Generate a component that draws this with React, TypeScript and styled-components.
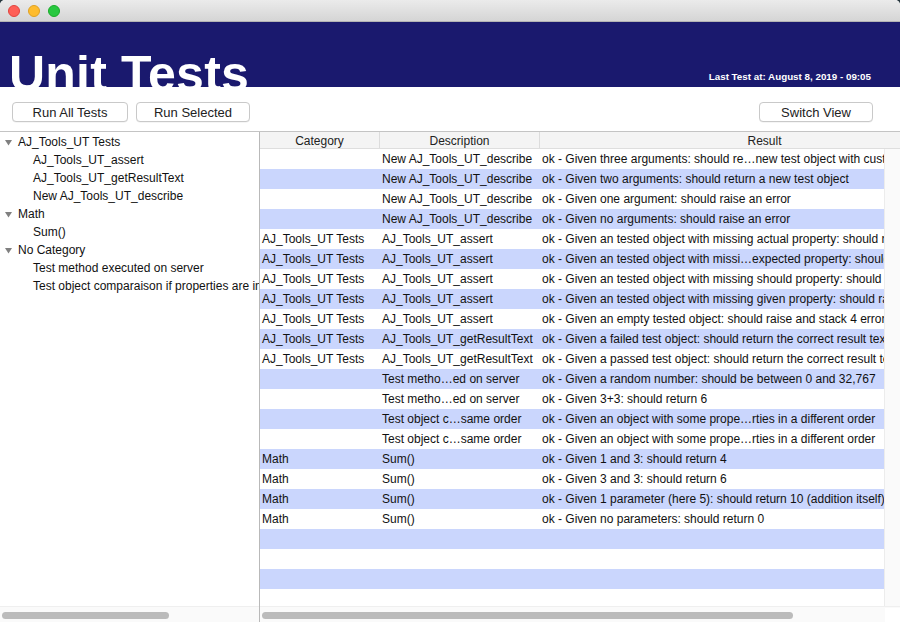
import React from "react";
import styled, { createGlobalStyle } from "styled-components";

interface TestRow {
  category: string;
  description: string;
  result: string;
}

interface TreeNode {
  label: string;
  children: string[];
}

const tree: TreeNode[] = [
  {
    label: "AJ_Tools_UT Tests",
    children: [
      "AJ_Tools_UT_assert",
      "AJ_Tools_UT_getResultText",
      "New AJ_Tools_UT_describe",
    ],
  },
  { label: "Math", children: ["Sum()"] },
  {
    label: "No Category",
    children: [
      "Test method executed on server",
      "Test object comparaison if properties are in the same order",
    ],
  },
];

const describe = "New AJ_Tools_UT_describe";
const ajTests = "AJ_Tools_UT Tests";

const rows: TestRow[] = [
  { category: "", description: describe, result: "ok - Given three arguments: should re…new test object with custom values" },
  { category: "", description: describe, result: "ok - Given two arguments: should return a new test object" },
  { category: "", description: describe, result: "ok - Given one argument: should raise an error" },
  { category: "", description: describe, result: "ok - Given no arguments: should raise an error" },
  { category: ajTests, description: "AJ_Tools_UT_assert", result: "ok - Given an tested object with missing actual property: should raise an error" },
  { category: ajTests, description: "AJ_Tools_UT_assert", result: "ok - Given an tested object with missi…expected property: should raise an error" },
  { category: ajTests, description: "AJ_Tools_UT_assert", result: "ok - Given an tested object with missing should property: should raise an error" },
  { category: ajTests, description: "AJ_Tools_UT_assert", result: "ok - Given an tested object with missing given property: should raise an error" },
  { category: ajTests, description: "AJ_Tools_UT_assert", result: "ok - Given an empty tested object: should raise and stack 4 errors" },
  { category: ajTests, description: "AJ_Tools_UT_getResultText", result: "ok - Given a failed test object: should return the correct result text" },
  { category: ajTests, description: "AJ_Tools_UT_getResultText", result: "ok - Given a passed test object: should return the correct result text" },
  { category: "", description: "Test metho…ed on server", result: "ok - Given a random number: should be between 0 and 32,767" },
  { category: "", description: "Test metho…ed on server", result: "ok - Given 3+3: should return 6" },
  { category: "", description: "Test object c…same order", result: "ok - Given an object with some prope…rties in a different order" },
  { category: "", description: "Test object c…same order", result: "ok - Given an object with some prope…rties in a different order" },
  { category: "Math", description: "Sum()", result: "ok - Given 1 and 3: should return 4" },
  { category: "Math", description: "Sum()", result: "ok - Given 3 and 3: should return 6" },
  { category: "Math", description: "Sum()", result: "ok - Given 1 parameter (here 5): should return 10 (addition itself)" },
  { category: "Math", description: "Sum()", result: "ok - Given no parameters: should return 0" },
];

const EMPTY_ROWS = 4;

const GlobalStyle = createGlobalStyle`
  html, body {
    margin: 0;
    padding: 0;
    background: #26363d;
  }
  body {
    font-family: "Liberation Sans", Arial, sans-serif;
    color: #111;
  }
`;

const Window = styled.div`
  width: 900px;
  height: 622px;
  display: flex;
  flex-direction: column;
  background: #ffffff;
  border-radius: 5px 5px 0 0;
  overflow: hidden;
`;

const TitleBar = styled.div`
  height: 21px;
  display: flex;
  align-items: center;
  gap: 8px;
  padding-left: 8px;
  background: linear-gradient(#ebebeb, #d5d5d5);
  border-bottom: 1px solid #b4b4b4;
`;

const Light = styled.span<{ $color: string; $edge: string }>`
  width: 12px;
  height: 12px;
  border-radius: 50%;
  box-sizing: border-box;
  background: ${({ $color }) => $color};
  border: 0.5px solid ${({ $edge }) => $edge};
`;

const Banner = styled.div`
  height: 65px;
  display: flex;
  justify-content: space-between;
  align-items: flex-end;
  padding: 0 29px 0 9px;
  background: #1a196e;
  overflow: hidden;
`;

const Title = styled.h1`
  margin: 0 0 -12px 0;
  font-size: 50px;
  line-height: 50px;
  font-weight: 700;
  color: #ffffff;
  letter-spacing: 0.2px;
`;

const LastTest = styled.div`
  margin-bottom: 5px;
  font-size: 9.8px;
  font-weight: 700;
  color: #ffffff;
`;

const Toolbar = styled.div`
  height: 45px;
  box-sizing: border-box;
  display: flex;
  align-items: flex-start;
  gap: 8px;
  padding: 15px 27px 0 12px;
  border-bottom: 1px solid #c4c4c4;
`;

const Spacer = styled.div`
  flex: 1;
`;

const Button = styled.button<{ $width: number }>`
  width: ${({ $width }) => $width}px;
  height: 20px;
  padding: 0;
  border: 1px solid #c9c9c9;
  border-radius: 4px;
  background: #ffffff;
  font-family: "Liberation Sans", Arial, sans-serif;
  font-size: 13px;
  color: #222;
  box-shadow: 0 0.5px 0 rgba(0, 0, 0, 0.08);
`;

const Main = styled.div`
  flex: 1;
  display: flex;
  min-height: 0;
`;

const Sidebar = styled.div`
  width: 259px;
  display: flex;
  flex-direction: column;
  border-right: 1px solid #b9b9b9;
`;

const TreeList = styled.ul`
  flex: 1;
  margin: 0;
  padding: 1px 0 0 0;
  list-style: none;
  overflow: hidden;
`;

const TreeItem = styled.li<{ $depth: number }>`
  height: 18px;
  display: flex;
  align-items: center;
  padding-left: ${({ $depth }) => ($depth === 0 ? 5 : 33)}px;
  font-size: 12px;
  white-space: nowrap;
`;

const Disclosure = styled.svg`
  width: 7px;
  height: 7px;
  margin-right: 6px;
  flex-shrink: 0;
`;

const ScrollTrack = styled.div`
  height: 16px;
  box-sizing: border-box;
  display: flex;
  align-items: center;
  padding: 1px 2px 0 2px;
  background: #fafafa;
  border-top: 1px solid #efefef;
`;

const ScrollThumb = styled.div<{ $width: number }>`
  width: ${({ $width }) => $width}px;
  height: 7px;
  border-radius: 4px;
  background: #bbbbbb;
`;

const TablePane = styled.div`
  flex: 1;
  min-width: 0;
  display: flex;
  flex-direction: column;
`;

const Columns = `
  display: grid;
  grid-template-columns: 120px 160px 450px;
`;

const HeaderRow = styled.div`
  ${Columns};
  height: 17px;
  box-sizing: border-box;
  background: #f4f4f4;
  border-bottom: 1px solid #dedede;
  overflow: hidden;
`;

const HeaderCell = styled.div`
  display: flex;
  align-items: center;
  justify-content: center;
  padding-top: 1px;
  font-size: 12px;
  color: #222;
  border-right: 1px solid #dcdcdc;
`;

const TableBody = styled.div`
  flex: 1;
  display: flex;
  min-height: 0;
`;

const RowList = styled.div`
  flex: 1;
  overflow: hidden;
`;

const Row = styled.div<{ $striped: boolean }>`
  ${Columns};
  height: 20px;
  background: ${({ $striped }) => ($striped ? "#cad6fd" : "#ffffff")};
`;

const Cell = styled.div`
  display: flex;
  align-items: center;
  padding-left: 2px;
  font-size: 12px;
  white-space: nowrap;
  overflow: hidden;
`;

const VGutter = styled.div`
  width: 15px;
  background: #fafafa;
  border-left: 1px solid #ececec;
`;

const TableScroll = styled(ScrollTrack)`
  padding-right: 0;
`;

const Corner = styled.div`
  margin-left: auto;
  width: 15px;
  height: 15px;
  background: #ffffff;
`;

const Triangle = () => (
  <Disclosure viewBox="0 0 7 7">
    <path d="M0 1 L7 1 L3.5 6.5 Z" fill="#808080" />
  </Disclosure>
);

const App: React.FC = () => {
  const total = rows.length + EMPTY_ROWS;

  return (
    <>
      <GlobalStyle />
      <Window>
        <TitleBar>
          <Light $color="#fe5f57" $edge="#e0443e" />
          <Light $color="#febc2e" $edge="#dea123" />
          <Light $color="#28c840" $edge="#1aab29" />
        </TitleBar>
        <Banner>
          <Title>Unit Tests</Title>
          <LastTest>Last Test at: August 8, 2019 - 09:05</LastTest>
        </Banner>
        <Toolbar>
          <Button $width={116}>Run All Tests</Button>
          <Button $width={114}>Run Selected</Button>
          <Spacer />
          <Button $width={114}>Switch View</Button>
        </Toolbar>
        <Main>
          <Sidebar>
            <TreeList>
              {tree.map((node) => (
                <React.Fragment key={node.label}>
                  <TreeItem $depth={0}>
                    <Triangle />
                    {node.label}
                  </TreeItem>
                  {node.children.map((child) => (
                    <TreeItem key={child} $depth={1}>
                      {child}
                    </TreeItem>
                  ))}
                </React.Fragment>
              ))}
            </TreeList>
            <ScrollTrack>
              <ScrollThumb $width={167} />
            </ScrollTrack>
          </Sidebar>
          <TablePane>
            <HeaderRow>
              <HeaderCell>Category</HeaderCell>
              <HeaderCell>Description</HeaderCell>
              <HeaderCell>Result</HeaderCell>
            </HeaderRow>
            <TableBody>
              <RowList>
                {Array.from({ length: total }, (_, i) => {
                  const row = rows[i];
                  return (
                    <Row key={i} $striped={i % 2 === 1}>
                      <Cell>{row?.category}</Cell>
                      <Cell>{row?.description}</Cell>
                      <Cell>{row?.result}</Cell>
                    </Row>
                  );
                })}
              </RowList>
              <VGutter />
            </TableBody>
            <TableScroll>
              <ScrollThumb $width={531} />
              <Corner />
            </TableScroll>
          </TablePane>
        </Main>
      </Window>
    </>
  );
};

export default App;
